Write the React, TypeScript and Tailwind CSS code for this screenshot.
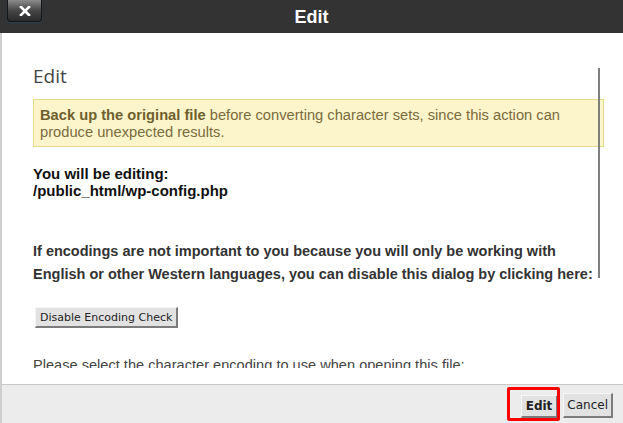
const BTN =
  "font-['DejaVu_Sans',Verdana,sans-serif] text-[#222] bg-[#e2e2e2] border-t border-l border-r-2 border-b-2 border-t-[#f6f6f6] border-l-[#f6f6f6] border-r-[#7c7c7c] border-b-[#7c7c7c] leading-none";

function CloseButton() {
  return (
    <button className="ml-[7px] w-[35px] h-[22px] flex items-center justify-center rounded-b-[4px] border border-t-0 border-[#151515] bg-gradient-to-b from-[#8c8c8c] via-[#474747] to-[#2b2b2b] shadow-[0_1px_2px_rgba(40,70,90,0.8)]">
      <svg width="12" height="10" viewBox="0 0 12 10">
        <path d="M2 1 L10 9 M10 1 L2 9" stroke="#fff" strokeWidth="2.6" strokeLinecap="square" />
      </svg>
    </button>
  );
}

function Header() {
  return (
    <div className="relative h-[33px] shrink-0 bg-[#333333] flex items-start">
      <CloseButton />
      <div className="absolute inset-0 flex items-center justify-center pointer-events-none">
        <span className="text-white font-bold text-[18px] pt-[1px]">Edit</span>
      </div>
    </div>
  );
}

function Footer() {
  return (
    <div className="h-[39px] shrink-0 bg-[#ececec] border-t border-[#c9c9c9] flex items-center justify-end gap-[5px] pr-[10px] pt-[3px]">
      <div className="relative">
        <button className={`${BTN} h-[23px] px-[4px] text-[12px] font-bold`}>Edit</button>
        <div className="absolute -left-[14px] -top-[6px] -right-[2px] -bottom-[3px] border-[3px] border-[#ff0000] rounded-[2px]" />
      </div>
      <button className={`${BTN} h-[25px] px-[3px] text-[12px]`}>Cancel</button>
    </div>
  );
}

export default function App() {
  return (
    <div className="w-[623px] h-[423px] flex flex-col bg-white overflow-hidden font-['Liberation_Sans',Arial,sans-serif]">
      <Header />
      <div className="flex flex-1 min-h-0">
        <div className="w-[2px] bg-[#cecece]" />
        <div className="flex flex-col flex-1 min-w-0">
          <div className="relative h-[351px] bg-white">
            <div className="h-[335px] overflow-hidden pl-[31px] pr-[19px] pt-[32px]">
              <h2 className="font-['Open_Sans',sans-serif] text-[19px] leading-[22px] text-[#444]">Edit</h2>
              <div className="mt-[12px] h-[48px] bg-[#fcf5cb] border border-[#e7db8b] pl-[6px] pt-[7px] text-[14.7px] leading-[17px] text-[#7b6b3c] whitespace-nowrap">
                <b className="text-[#6f5f2e]">Back up the original file</b> before converting character sets, since this action can
                <br />
                produce unexpected results.
              </div>
              <p className="mt-[18px] text-[15px] leading-[17px] font-bold text-[#111]">
                You will be editing:
                <br />
                /public_html/wp-config.php
              </p>
              <p className="mt-[41px] text-[14.5px] leading-[23px] font-bold text-[#333] whitespace-nowrap">
                If encodings are not important to you because you will only be working with
                <br />
                English or other Western languages, you can disable this dialog by clicking here:
              </p>
              <button className={`${BTN} mt-[21px] ml-[2px] h-[21px] px-[4px] text-[11px]`}>Disable Encoding Check</button>
              <p className="mt-[29px] text-[14.6px] leading-[17px] text-[#444] whitespace-nowrap">
                Please select the character encoding to use when opening this file:
              </p>
            </div>
            <div className="absolute left-[596px] top-[35px] w-[2px] h-[210px] bg-[#7f7f7f]" />
          </div>
          <Footer />
        </div>
      </div>
    </div>
  );
}
